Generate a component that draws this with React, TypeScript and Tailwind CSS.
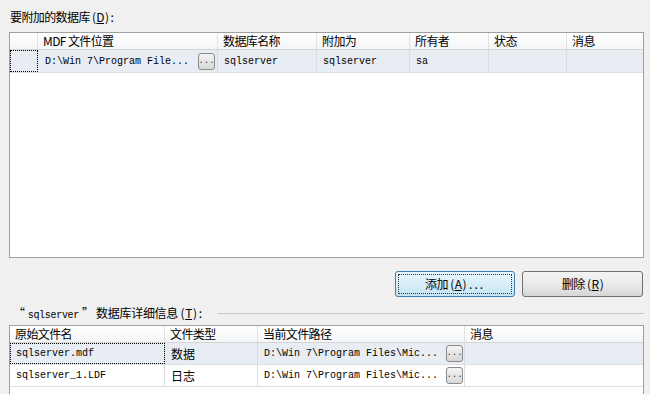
import React from 'react';

const cjk = '"Noto Sans CJK SC", "Noto Sans", sans-serif';
const mono = '"Liberation Mono", "Noto Sans CJK SC", monospace';

const Dots = () => (
  <span
    className="shrink-0 w-[17px] h-[17px] rounded-[3px] border border-[#8a8a8a] bg-gradient-to-b from-[#f4f4f4] to-[#d8d8d8] flex items-end justify-center pb-[3px] text-[9px] leading-none text-[#333]"
    style={{fontFamily: mono}}
  >
    ...
  </span>
);

const Ul = ({children}: {children: React.ReactNode}) => (
  <span className="underline underline-offset-[1px] px-[1px]">{children}</span>
);

const Head = ({w, children, last}: {w: string; children?: React.ReactNode; last?: boolean}) => (
  <div className={`${w} ${last ? 'flex-1' : 'shrink-0 border-r border-[#e3e3e3]'} h-full flex items-center pl-[5px] overflow-hidden whitespace-nowrap`}>
    {children}
  </div>
);

const Cell = ({w, children, last, focus}: {w: string; children?: React.ReactNode; last?: boolean; focus?: boolean}) => (
  <div
    className={`${w} ${last ? 'flex-1' : 'shrink-0 border-r border-[#dcdcdc]'} h-full flex items-center pl-[6px] overflow-hidden whitespace-nowrap ${focus ? 'outline outline-1 outline-dotted outline-black -outline-offset-1' : ''}`}
  >
    {children}
  </div>
);

export default function App() {
  return (
    <div
      className="w-[650px] h-[394px] bg-[#f0f0f0] overflow-hidden pl-[9px] pr-[6px] text-[12px] text-black"
      style={{fontFamily: cjk}}
    >
      <div className="h-[32px] pt-[9px] pl-[1px] leading-[16px] tracking-[-0.6px]">
        要附加的数据库 (<Ul>D</Ul>)<span className="pl-[2px]">:</span>
      </div>

      {/* top grid */}
      <div className="h-[226px] border border-[#a0a0a0] bg-white flex flex-col">
        <div className="h-[17px] flex bg-gradient-to-b from-[#ffffff] to-[#f4f5f7] border-b border-[#d5d5d5] leading-none tracking-[-0.6px]">
          <Head w="w-[28px]" />
          <Head w="w-[180px]">MDF 文件位置</Head>
          <Head w="w-[99px]">数据库名称</Head>
          <Head w="w-[93px]">附加为</Head>
          <Head w="w-[79px]">所有者</Head>
          <Head w="w-[78px]">状态</Head>
          <Head w="" last>消息</Head>
        </div>
        <div className="h-[23px] flex bg-[#e8edf3] border-b border-[#e0e0e0] text-[10px]" style={{fontFamily: mono}}>
          <Cell w="w-[28px]" focus />
          <Cell w="w-[180px]">
            <span className="flex-1 pl-[1px]">D:\Win 7\Program File...</span>
            <span className="mr-[2px]"><Dots /></span>
          </Cell>
          <Cell w="w-[99px]">sqlserver</Cell>
          <Cell w="w-[93px]">sqlserver</Cell>
          <Cell w="w-[79px]">sa</Cell>
          <Cell w="w-[78px]" />
          <Cell w="" last />
        </div>
      </div>

      {/* buttons */}
      <div className="mt-[13px] h-[26px] flex justify-end gap-[7px] pr-[1px] tracking-[-0.5px]">
        <button className="w-[120px] h-[26px] rounded-[3px] border border-[#3c7fb1] bg-gradient-to-b from-[#e9f6fd] to-[#c6e4f5] p-[2px]">
          <span className="w-full h-full flex items-center justify-center outline outline-1 outline-dotted outline-[#333] -outline-offset-1">
            添加 (<Ul>A</Ul>)<span className="pl-[3px] tracking-[2px]">...</span>
          </span>
        </button>
        <button className="w-[121px] h-[26px] rounded-[3px] border border-[#707070] bg-gradient-to-b from-[#f4f4f4] via-[#ebebeb] to-[#d6d6d6] flex items-center justify-center">
          删除 (<Ul>R</Ul>)
        </button>
      </div>

      {/* detail label */}
      <div className="mt-[6px] h-[20px] flex items-center pl-[4px] tracking-[-0.3px]">
        <span className="whitespace-nowrap">
          “<span className="text-[10px] px-[3px]" style={{fontFamily: mono}}>sqlserver</span>” 数据库详细信息 (<Ul>T</Ul>)<span className="pl-[2px]">:</span>
        </span>
        <span className="flex-1 ml-[16px] h-0 border-t border-[#c8c8c8] border-b-white" />
      </div>

      {/* bottom grid */}
      <div className="mt-[2px] h-[100px] border border-[#a0a0a0] bg-white flex flex-col">
        <div className="h-[17px] flex bg-gradient-to-b from-[#ffffff] to-[#f4f5f7] border-b border-[#d5d5d5] leading-none tracking-[-0.6px]">
          <Head w="w-[155px]">原始文件名</Head>
          <Head w="w-[93px]">文件类型</Head>
          <Head w="w-[207px]">当前文件路径</Head>
          <Head w="" last>消息</Head>
        </div>
        <div className="h-[22px] flex bg-[#e8edf3] border-b border-[#e0e0e0] text-[10px]" style={{fontFamily: mono}}>
          <Cell w="w-[155px]" focus>sqlserver.mdf</Cell>
          <Cell w="w-[93px]"><span className="text-[12px]" style={{fontFamily: cjk}}>数据</span></Cell>
          <Cell w="w-[207px]">
            <span className="flex-1">D:\Win 7\Program Files\Mic...</span>
            <span className="mr-[1px]"><Dots /></span>
          </Cell>
          <Cell w="" last />
        </div>
        <div className="h-[22px] flex bg-white border-b border-[#e0e0e0] text-[10px]" style={{fontFamily: mono}}>
          <Cell w="w-[155px]">sqlserver_1.LDF</Cell>
          <Cell w="w-[93px]"><span className="text-[12px]" style={{fontFamily: cjk}}>日志</span></Cell>
          <Cell w="w-[207px]">
            <span className="flex-1">D:\Win 7\Program Files\Mic...</span>
            <span className="mr-[1px]"><Dots /></span>
          </Cell>
          <Cell w="" last />
        </div>
      </div>
    </div>
  );
}
